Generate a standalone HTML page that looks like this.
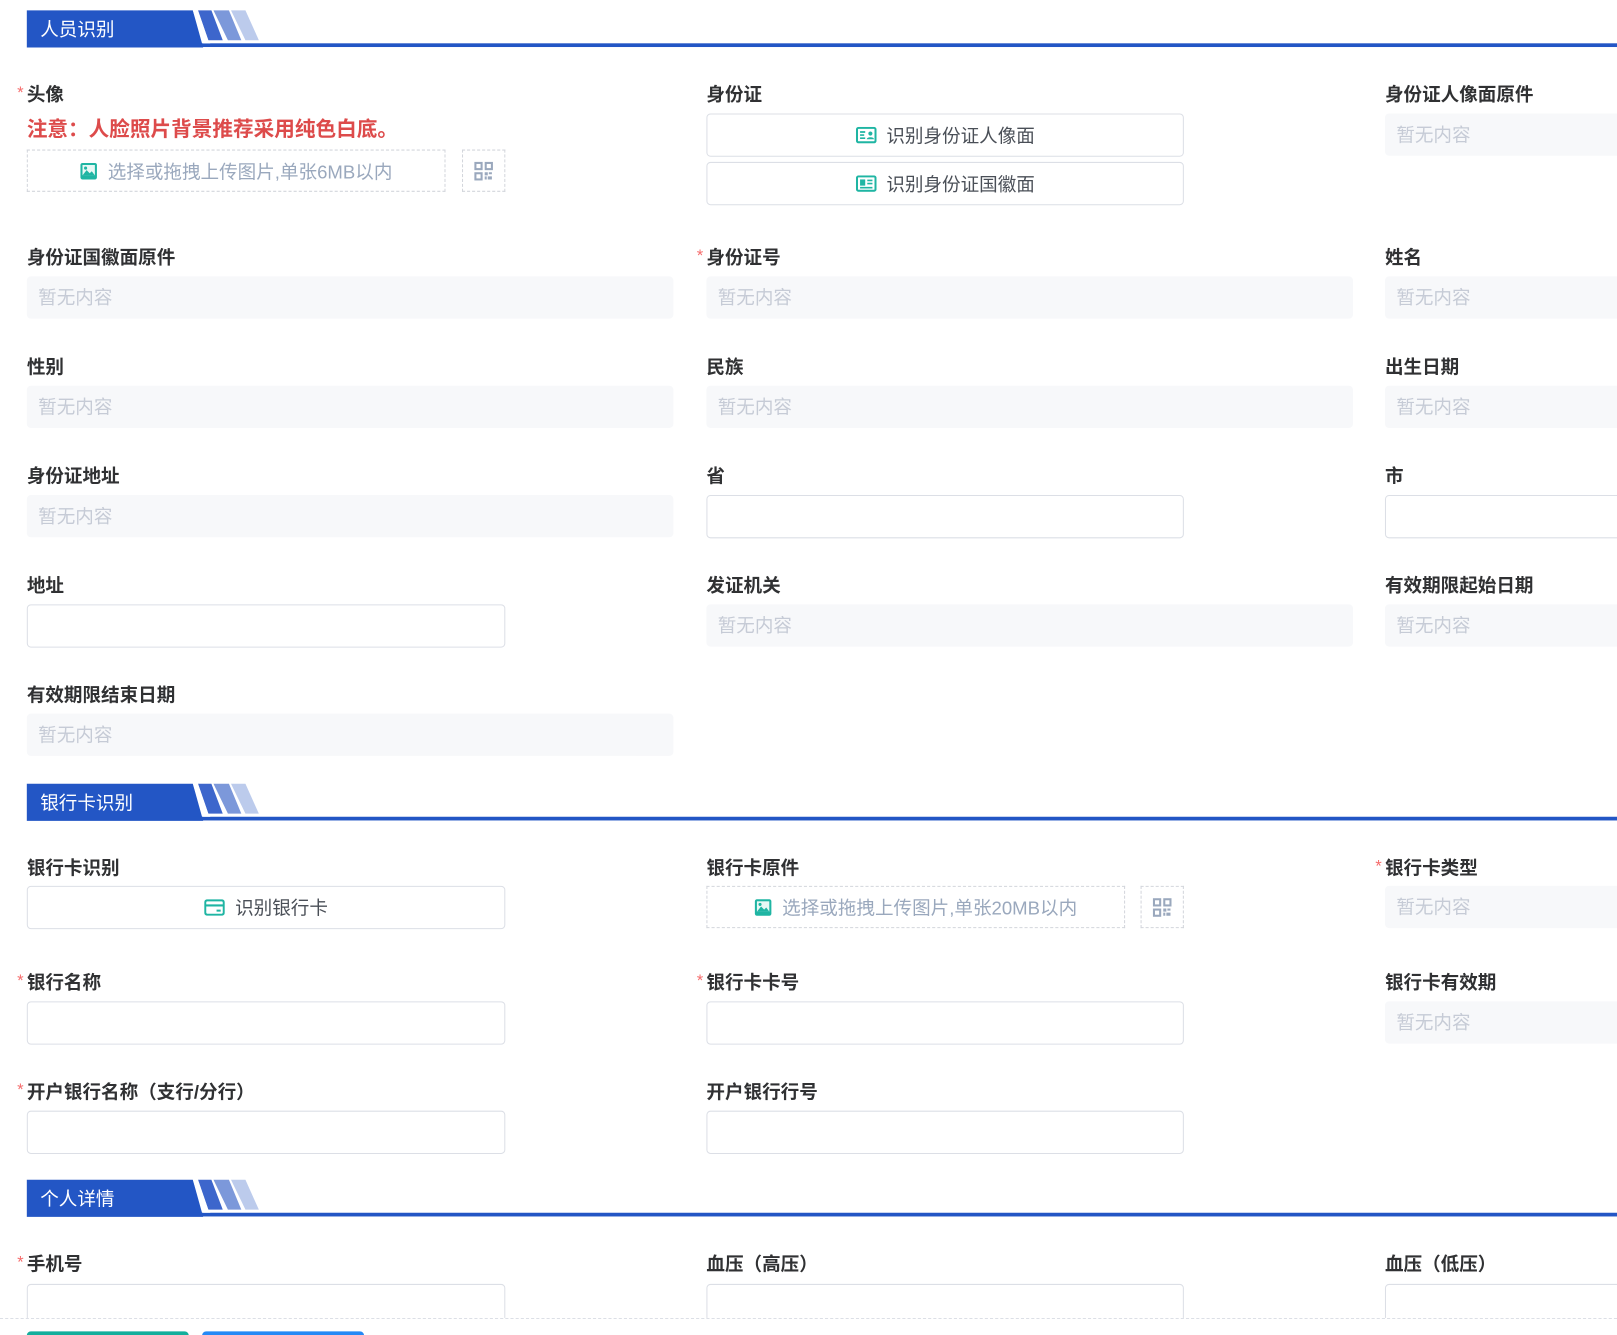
<!DOCTYPE html>
<html><head><meta charset="utf-8"><style>
html,body{margin:0;padding:0;background:#fff;overflow:hidden;width:1617px;height:1335px}
#w{position:absolute;left:0;top:0;width:1568px;height:1295px;transform:scale(1.03125);transform-origin:0 0;font-family:"Liberation Sans","Noto Sans CJK SC",sans-serif;overflow:hidden}
.a{position:absolute}
.lbl{position:absolute;font-size:18px;font-weight:bold;color:#303133;line-height:24px;white-space:nowrap;margin-top:2px}
.lbl .s{position:absolute;left:-10px;top:-1px;color:#f56c6c;font-size:16px;font-weight:normal}
.fld{position:absolute;background:#f7f8fa;border-radius:4px;height:41px;color:#c6cbd6;font-size:18px;line-height:43px;padding-left:11px;box-sizing:border-box;white-space:nowrap}
.inp{position:absolute;border:1px solid #dcdfe6;border-radius:4px;height:42px;box-sizing:border-box;background:#fff}
.btn{position:absolute;border:1px solid #dcdfe6;border-radius:4px;height:42px;box-sizing:border-box;background:#fff;font-size:18px;color:#4a4f57;display:flex;align-items:center;justify-content:center;white-space:nowrap}
.btn svg{margin-right:10px}
.up{position:absolute;border:1px dashed #d3d6dc;height:41px;box-sizing:border-box;font-size:18px;color:#9aa8bd;display:flex;align-items:center;justify-content:center;white-space:nowrap}
.up svg{margin-right:9px}
.hd{position:absolute;left:0;width:1568px;height:40px}
.hd span{position:absolute;left:39px;top:9px;color:#fff;font-size:18px;line-height:24px}
</style></head><body><div id="w">

<div class="hd" style="top:8px">
<svg width="1568" height="40" style="position:absolute;left:0;top:0">
<polygon points="26,2 187,2 197,38 26,38" fill="#2356c5"/>
<rect x="187" y="34" width="1381" height="3.6" fill="#2356c5"/>
<polygon points="192,2 205,2 216,31 202,31" fill="#3d66cc"/>
<polygon points="207,2 222,2 234,31 221,31" fill="#7c98da"/>
<polygon points="224,2 238,2 251,31 238,31" fill="#bccbec"/>
<polygon points="187,2 192,2 202,31 204,34 197,34" fill="#fff"/>
</svg><span>人员识别</span></div>

<div class="lbl" style="left:26px;top:78px"><i class="s">*</i>头像</div>
<div class="a" style="left:26px;top:113px;font-size:20px;font-weight:bold;color:#dd4b4b;line-height:26px;white-space:nowrap">注意：人脸照片背景推荐采用纯色白底。</div>
<div class="up" style="left:26px;top:145px;width:406px"><svg width="18" height="18" viewBox="0 0 18 18"><rect x="1" y="1" width="16" height="16" rx="2" fill="#1fb5a3"/><rect x="3" y="3" width="12" height="10" fill="#e8f8f5"/><circle cx="6" cy="6" r="1.5" fill="#1fb5a3"/><path d="M3 13 L7 8 L10 11 L12 9 L15 13Z" fill="#1fb5a3"/></svg>选择或拖拽上传图片,单张6MB以内</div>
<div class="up" style="left:448px;top:145px;width:42px"><svg width="20" height="20" viewBox="0 0 20 20" style="margin:0"><g fill="none" stroke="#9aa8bd" stroke-width="2"><rect x="2" y="2" width="6" height="6"/><rect x="12" y="2" width="6" height="6"/><rect x="2" y="12" width="6" height="6"/></g><path d="M11 11h3v3h-3zM15 11h3v2h-3zM11 15h2v3h-2zM14 15h4v3h-4z" fill="#9aa8bd"/></svg></div>

<div class="lbl" style="left:685px;top:78px">身份证</div>
<div class="btn" style="left:685px;top:110px;width:463px"><svg width="20" height="16" viewBox="0 0 20 16"><rect x="1" y="1" width="18" height="14" rx="1.5" fill="none" stroke="#1fb5a3" stroke-width="2"/><path d="M4 5h5M4 8h4M4 11h5" stroke="#1fb5a3" stroke-width="1.6"/><circle cx="14" cy="6.5" r="2" fill="#1fb5a3"/><path d="M10.5 12c0-2.5 7-2.5 7 0z" fill="#1fb5a3"/></svg>识别身份证人像面</div>
<div class="btn" style="left:685px;top:157px;width:463px"><svg width="20" height="16" viewBox="0 0 20 16"><rect x="1" y="1" width="18" height="14" rx="1.5" fill="none" stroke="#1fb5a3" stroke-width="2"/><rect x="4" y="4" width="5" height="6" fill="#1fb5a3"/><path d="M11 5h5M11 8h5M4 12h12" stroke="#1fb5a3" stroke-width="1.6"/></svg>识别身份证国徽面</div>

<div class="lbl" style="left:1343px;top:78px">身份证人像面原件</div>
<div class="fld" style="left:1343px;top:110px;width:300px">暂无内容</div>

<div class="lbl" style="left:26px;top:236px">身份证国徽面原件</div>
<div class="fld" style="left:26px;top:268px;width:627px">暂无内容</div>
<div class="lbl" style="left:685px;top:236px"><i class="s">*</i>身份证号</div>
<div class="fld" style="left:685px;top:268px;width:627px">暂无内容</div>
<div class="lbl" style="left:1343px;top:236px">姓名</div>
<div class="fld" style="left:1343px;top:268px;width:300px">暂无内容</div>

<div class="lbl" style="left:26px;top:342px">性别</div>
<div class="fld" style="left:26px;top:374px;width:627px">暂无内容</div>
<div class="lbl" style="left:685px;top:342px">民族</div>
<div class="fld" style="left:685px;top:374px;width:627px">暂无内容</div>
<div class="lbl" style="left:1343px;top:342px">出生日期</div>
<div class="fld" style="left:1343px;top:374px;width:300px">暂无内容</div>

<div class="lbl" style="left:26px;top:448px">身份证地址</div>
<div class="fld" style="left:26px;top:480px;width:627px">暂无内容</div>
<div class="lbl" style="left:685px;top:448px">省</div>
<div class="inp" style="left:685px;top:480px;width:463px"></div>
<div class="lbl" style="left:1343px;top:448px">市</div>
<div class="inp" style="left:1343px;top:480px;width:300px"></div>

<div class="lbl" style="left:26px;top:554px">地址</div>
<div class="inp" style="left:26px;top:586px;width:464px"></div>
<div class="lbl" style="left:685px;top:554px">发证机关</div>
<div class="fld" style="left:685px;top:586px;width:627px">暂无内容</div>
<div class="lbl" style="left:1343px;top:554px">有效期限起始日期</div>
<div class="fld" style="left:1343px;top:586px;width:300px">暂无内容</div>

<div class="lbl" style="left:26px;top:660px">有效期限结束日期</div>
<div class="fld" style="left:26px;top:692px;width:627px">暂无内容</div>

<div class="hd" style="top:758px">
<svg width="1568" height="40" style="position:absolute;left:0;top:0">
<polygon points="26,2 187,2 197,38 26,38" fill="#2356c5"/>
<rect x="187" y="34" width="1381" height="3.6" fill="#2356c5"/>
<polygon points="192,2 205,2 216,31 202,31" fill="#3d66cc"/>
<polygon points="207,2 222,2 234,31 221,31" fill="#7c98da"/>
<polygon points="224,2 238,2 251,31 238,31" fill="#bccbec"/>
<polygon points="187,2 192,2 202,31 204,34 197,34" fill="#fff"/>
</svg><span>银行卡识别</span></div>

<div class="lbl" style="left:26px;top:828px">银行卡识别</div>
<div class="btn" style="left:26px;top:859px;width:464px"><svg width="20" height="16" viewBox="0 0 20 16"><rect x="1" y="1" width="18" height="14" rx="2" fill="none" stroke="#1fb5a3" stroke-width="2"/><path d="M1 6h18M12 11h4" stroke="#1fb5a3" stroke-width="2"/></svg>识别银行卡</div>
<div class="lbl" style="left:685px;top:828px">银行卡原件</div>
<div class="up" style="left:685px;top:859px;width:406px"><svg width="18" height="18" viewBox="0 0 18 18"><rect x="1" y="1" width="16" height="16" rx="2" fill="#1fb5a3"/><rect x="3" y="3" width="12" height="10" fill="#e8f8f5"/><circle cx="6" cy="6" r="1.5" fill="#1fb5a3"/><path d="M3 13 L7 8 L10 11 L12 9 L15 13Z" fill="#1fb5a3"/></svg>选择或拖拽上传图片,单张20MB以内</div>
<div class="up" style="left:1106px;top:859px;width:42px"><svg width="20" height="20" viewBox="0 0 20 20" style="margin:0"><g fill="none" stroke="#9aa8bd" stroke-width="2"><rect x="2" y="2" width="6" height="6"/><rect x="12" y="2" width="6" height="6"/><rect x="2" y="12" width="6" height="6"/></g><path d="M11 11h3v3h-3zM15 11h3v2h-3zM11 15h2v3h-2zM14 15h4v3h-4z" fill="#9aa8bd"/></svg></div>
<div class="lbl" style="left:1343px;top:828px"><i class="s">*</i>银行卡类型</div>
<div class="fld" style="left:1343px;top:859px;width:300px">暂无内容</div>

<div class="lbl" style="left:26px;top:939px"><i class="s">*</i>银行名称</div>
<div class="inp" style="left:26px;top:971px;width:464px"></div>
<div class="lbl" style="left:685px;top:939px"><i class="s">*</i>银行卡卡号</div>
<div class="inp" style="left:685px;top:971px;width:463px"></div>
<div class="lbl" style="left:1343px;top:939px">银行卡有效期</div>
<div class="fld" style="left:1343px;top:971px;width:300px">暂无内容</div>

<div class="lbl" style="left:26px;top:1045px"><i class="s">*</i>开户银行名称（支行/分行）</div>
<div class="inp" style="left:26px;top:1077px;width:464px"></div>
<div class="lbl" style="left:685px;top:1045px">开户银行行号</div>
<div class="inp" style="left:685px;top:1077px;width:463px"></div>

<div class="hd" style="top:1142px">
<svg width="1568" height="40" style="position:absolute;left:0;top:0">
<polygon points="26,2 187,2 197,38 26,38" fill="#2356c5"/>
<rect x="187" y="34" width="1381" height="3.6" fill="#2356c5"/>
<polygon points="192,2 205,2 216,31 202,31" fill="#3d66cc"/>
<polygon points="207,2 222,2 234,31 221,31" fill="#7c98da"/>
<polygon points="224,2 238,2 251,31 238,31" fill="#bccbec"/>
<polygon points="187,2 192,2 202,31 204,34 197,34" fill="#fff"/>
</svg><span>个人详情</span></div>

<div class="lbl" style="left:26px;top:1212px"><i class="s">*</i>手机号</div>
<div class="inp" style="left:26px;top:1245px;width:464px"></div>
<div class="lbl" style="left:685px;top:1212px">血压（高压）</div>
<div class="inp" style="left:685px;top:1245px;width:463px"></div>
<div class="lbl" style="left:1343px;top:1212px">血压（低压）</div>
<div class="inp" style="left:1343px;top:1245px;width:300px"></div>

<div class="a" style="left:0;top:1278px;width:1568px;height:30px;background:#fff;border-top:1px dashed #dcdfe6"></div>
<div class="a" style="left:26px;top:1291px;width:157px;height:40px;background:#13ae9c;border-radius:4px"></div>
<div class="a" style="left:196px;top:1291px;width:157px;height:40px;background:#2589f5;border-radius:4px"></div>
</div></body></html>
